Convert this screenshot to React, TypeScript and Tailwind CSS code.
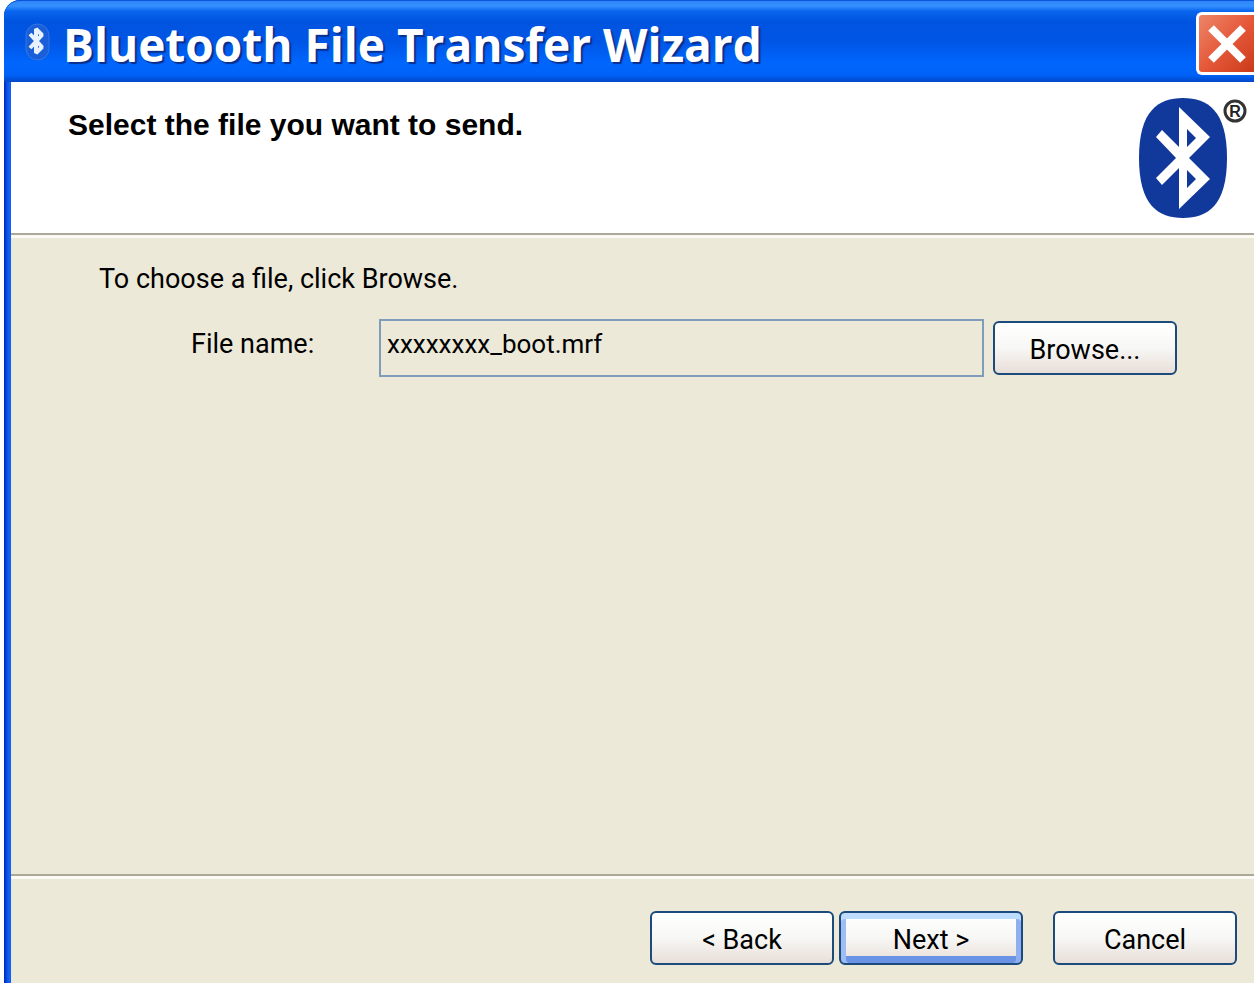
import type { ButtonHTMLAttributes } from "react"
import clsx from "clsx"

interface WizardButtonProps extends ButtonHTMLAttributes<HTMLButtonElement> {
  primary?: boolean
}

function WizardButton({ primary, className, ...props }: WizardButtonProps) {
  return (
    <button
      type="button"
      className={clsx(
        "h-[54px] w-[184px] shrink-0 rounded-md border-2 border-[#1c4a7a] bg-linear-to-b from-white via-[#f7f7f5] to-[#e8ded8] pt-1 text-[27px] leading-8 text-black",
        primary &&
          "shadow-[inset_0_6px_0_#bddcff,inset_5px_0_0_#9dbdf5,inset_-5px_0_0_#8fb0f0,inset_0_-7px_0_#6a93e6]",
        className,
      )}
      {...props}
    />
  )
}

function TitleBar() {
  return (
    <header className="flex h-[82px] items-center rounded-tl-2xl border-t border-[#0a55d8] bg-[linear-gradient(to_bottom,#2f86f8_0px,#3590ff_5px,#0a66ee_10px,#0054df_20px,#0055e5_40px,#0066fd_62px,#0062f8_74px,#0047c8_81px)] pl-5">
      <svg viewBox="0 0 26 40" className="h-10 w-[26px]" aria-hidden="true">
        <rect x="2" y="2" width="23" height="36" rx="11.5" fill="#1b5fd8" stroke="#3577e6" />
        <path
          d="M6 12 L18 25 L12 31 V7 L18 13 L6 26"
          fill="none"
          stroke="#e8f2ff"
          strokeWidth="4"
          strokeLinejoin="bevel"
        />
      </svg>
      <h1 className="ml-[13px] grow pt-1 font-['Open_Sans','Noto_Sans',sans-serif] text-[46px] leading-[60px] font-bold whitespace-nowrap text-white [text-shadow:2px_2px_1px_#0a2f8c]">
        Bluetooth File Transfer Wizard
      </h1>
      <button
        type="button"
        aria-label="Close"
        className="mt-1 flex h-[63px] w-[58px] items-center justify-center rounded-l-md border-[3px] border-r-0 border-white bg-linear-to-br from-[#ec8568] via-[#e5593a] to-[#c93a18]"
      >
        <svg viewBox="0 0 40 40" className="size-10" aria-hidden="true">
          <path d="M4 4 L36 36 M36 4 L4 36" stroke="#fff" strokeWidth="8" />
        </svg>
      </button>
    </header>
  )
}

function BluetoothLogo() {
  return (
    <svg viewBox="0 0 110 122" className="h-[122px] w-[110px] shrink-0" role="img" aria-label="Bluetooth">
      <path
        d="M45 1 C70 1 89 14 89 61 C89 108 70 121 45 121 C20 121 1 108 1 61 C1 14 20 1 45 1 Z"
        fill="#10399b"
      />
      <path
        fillRule="evenodd"
        fill="#fff"
        d="M41 10 L72 40 L51 61 L72 82 L41 112 V71 L24 88 L18 81 L38 61 L18 40 L24 33 L41 50 Z M49 32 V50 L58 41 Z M49 73 V91 L58 82 Z"
      />
      <circle cx="97" cy="14" r="10" fill="none" stroke="#333" strokeWidth="3" />
      <text x="97" y="20" textAnchor="middle" fontSize="16" fontWeight="bold" fontFamily="Liberation Sans" fill="#222">
        R
      </text>
    </svg>
  )
}

export default function App() {
  return (
    <div className="min-h-screen bg-white pr-px pb-0.5 pl-1 font-['Roboto','Liberation_Sans',sans-serif] text-black">
      <div className="flex min-h-[calc(100vh-2px)] flex-col rounded-tl-2xl bg-[linear-gradient(to_right,#0026b8_0px,#0b4fe6_3px,#1468f8_6px,#0a45d0_8px)]">
        <TitleBar />

        <main className="ml-[7px] flex grow flex-col bg-[#ece9d8]">
          <section className="flex h-[151px] items-start justify-between bg-white pt-[15px] pr-1.5 pl-[57px]">
            <h2 className="mt-2.5 font-['Liberation_Sans',sans-serif] text-[30px] leading-9 font-bold">
              Select the file you want to send.
            </h2>
            <BluetoothLogo />
          </section>

          <section className="grow border-t-2 border-[#aca899] pr-[77px] shadow-[inset_0_3px_0_#fbfaf5]">
            <p className="pt-7 pl-[88px] text-[27px] leading-8">To choose a file, click Browse.</p>
            <div className="mt-6 flex items-center gap-[9px] pl-[180px]">
              <label htmlFor="file-name" className="w-[179px] shrink-0 pb-2 text-[27px] leading-8">
                File name:
              </label>
              <input
                id="file-name"
                type="text"
                readOnly
                defaultValue="xxxxxxxx_boot.mrf"
                className="h-[58px] min-w-0 grow border-2 border-[#7f9db9] bg-transparent px-1.5 pb-2 text-[26px] leading-8 outline-none"
              />
              <WizardButton>Browse...</WizardButton>
            </div>
          </section>

          <footer className="flex h-[109px] items-start justify-end border-t-2 border-[#aca899] pt-[35px] pr-[17px] shadow-[inset_0_3px_0_#fbfaf5]">
            <WizardButton className="mr-[5px]">&lt; Back</WizardButton>
            <WizardButton primary className="mr-[30px]">
              Next &gt;
            </WizardButton>
            <WizardButton>Cancel</WizardButton>
          </footer>
        </main>
      </div>
    </div>
  )
}
